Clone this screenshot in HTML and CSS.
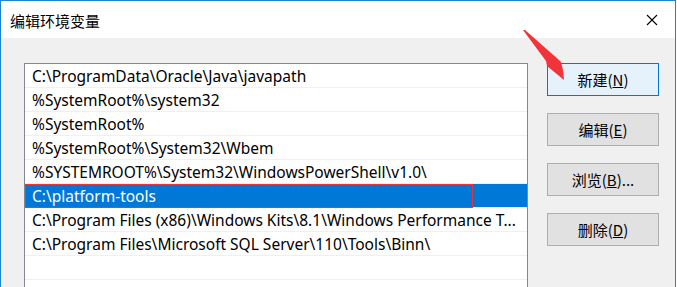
FILE: index.html
```html
<!DOCTYPE html>
<html lang="zh-CN">
<head>
    <meta charset="UTF-8">
    <title>编辑环境变量</title>
    <link rel="stylesheet" href="styles.css">
</head>
<body>
    <div class="dialog">
        <div class="title-bar">
            <span class="title">编辑环境变量</span>
            <svg class="close" width="12" height="12" viewBox="0 0 12 12">
                <path d="M1 1 L11 11 M11 1 L1 11" stroke="#000" stroke-width="1.1" fill="none"/>
            </svg>
        </div>

        <div class="content">
            <ul class="path-list">
                <li>C:\ProgramData\Oracle\Java\javapath</li>
                <li>%SystemRoot%\system32</li>
                <li>%SystemRoot%</li>
                <li>%SystemRoot%\System32\Wbem</li>
                <li>%SYSTEMROOT%\System32\WindowsPowerShell\v1.0\</li>
                <li class="selected"><span class="edit-box">C:\platform-tools</span></li>
                <li>C:\Program Files (x86)\Windows Kits\8.1\Windows Performance T...</li>
                <li>C:\Program Files\Microsoft SQL Server\110\Tools\Binn\</li>
                <li></li>
                <li></li>
            </ul>

            <div class="buttons">
                <button class="btn primary">新建(<u>N</u>)</button>
                <button class="btn">编辑(<u>E</u>)</button>
                <button class="btn">浏览(<u>B</u>)...</button>
                <button class="btn">删除(<u>D</u>)</button>
            </div>
        </div>

        <!-- red arrow annotation pointing at the "new" button -->
        <svg class="arrow" width="50" height="55" viewBox="0 0 50 55">
            <polygon points="0,0 23,31 24,36 41,50 40,40 38,32 36,30 2,0" fill="#f2333a"/>
        </svg>
    </div>
</body>
</html>
```

FILE: styles.css
```css
body {
    margin: 0;
    background-color: #ffffff;
    font-family: "Noto Sans", "Noto Sans CJK SC", sans-serif;
}

.dialog {
    position: relative;
    width: 674px;
    height: 300px;
    border: 1px solid #1883d7;
    border-bottom: none;
    background-color: #f0f0f0;
    overflow: hidden;
}

.title-bar {
    height: 37px;
    background-color: #ffffff;
    display: flex;
    align-items: center;
    justify-content: space-between;
    padding: 0 17px 0 9px;
}

.title {
    font-family: "Noto Sans CJK SC", sans-serif;
    font-size: 15px;
    color: #000000;
    padding-top: 1px;
}

.close {
    display: block;
    margin-top: 1px;
}

.content {
    display: flex;
    align-items: flex-start;
    padding: 25px 0 0 23px;
}

.path-list {
    list-style: none;
    margin: 0;
    padding: 0;
    width: 502px;
    border: 1px solid #828790;
    background-color: #ffffff;
}

.path-list li {
    height: 23px;
    line-height: 25px;
    border-bottom: 1px solid #f0f0f0;
    padding-left: 7px;
    font-size: 15.5px;
    color: #000000;
    white-space: nowrap;
    overflow: hidden;
}

.path-list li.selected {
    background-color: #0078d7;
    color: #ffffff;
    padding-left: 0;
    overflow: visible;
}

.edit-box {
    display: block;
    width: 448px;
    height: 24px;
    padding-left: 6px;
    border: 1px solid #e8353b;
    box-sizing: border-box;
    line-height: 23px;
}

.buttons {
    display: flex;
    flex-direction: column;
    gap: 17px;
    margin-left: 19px;
}

.btn {
    width: 112px;
    height: 33px;
    border: 1px solid #adadad;
    background-color: #e1e1e1;
    font-family: "Noto Sans CJK SC", sans-serif;
    font-size: 15px;
    color: #000000;
    padding: 0;
    cursor: pointer;
}

.btn.primary {
    border-color: #0078d7;
    background-color: #e5f1fb;
}

.arrow {
    position: absolute;
    left: 522px;
    top: 29px;
}
```
